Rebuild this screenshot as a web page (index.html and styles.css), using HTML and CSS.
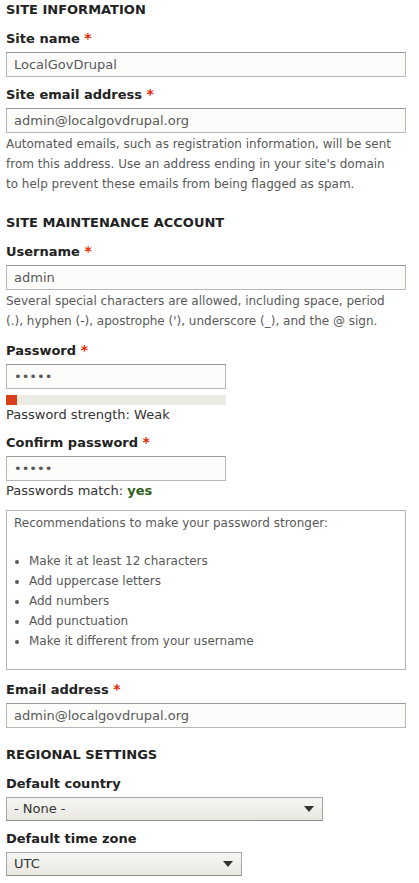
FILE: index.html
```html
<!DOCTYPE html>
<html lang="en">
<head>
<meta charset="utf-8">
<title>Configure site</title>
<link rel="stylesheet" href="styles.css">
</head>
<body>
<form class="form">
  <section class="fieldset">
    <h2 class="legend">Site information</h2>
    <div class="item">
      <label class="label">Site name <span class="req">*</span></label>
      <input class="text" type="text" value="LocalGovDrupal">
    </div>
    <div class="item">
      <label class="label">Site email address <span class="req">*</span></label>
      <input class="text" type="text" value="admin@localgovdrupal.org">
      <div class="desc">Automated emails, such as registration information, will be sent from this address. Use an address ending in your site's domain to help prevent these emails from being flagged as spam.</div>
    </div>
  </section>

  <section class="fieldset">
    <h2 class="legend">Site maintenance account</h2>
    <div class="item">
      <label class="label">Username <span class="req">*</span></label>
      <input class="text" type="text" value="admin">
      <div class="desc">Several special characters are allowed, including space, period (.), hyphen (-), apostrophe ('), underscore (_), and the @ sign.</div>
    </div>
    <div class="item">
      <label class="label">Password <span class="req">*</span></label>
      <input class="text short" type="password" value="admin">
      <div class="strength"><div class="strength-fill" style="width:5%"></div></div>
      <div class="status">Password strength: Weak</div>
    </div>
    <div class="item">
      <label class="label">Confirm password <span class="req">*</span></label>
      <input class="text short" type="password" value="admin">
      <div class="status">Passwords match: <span class="ok">yes</span></div>
    </div>
    <div class="suggestions">
      <div class="sugg-title">Recommendations to make your password stronger:</div>
      <ul class="sugg-list">
        <li>Make it at least 12 characters</li>
        <li>Add uppercase letters</li>
        <li>Add numbers</li>
        <li>Add punctuation</li>
        <li>Make it different from your username</li>
      </ul>
    </div>
    <div class="item">
      <label class="label">Email address <span class="req">*</span></label>
      <input class="text" type="text" value="admin@localgovdrupal.org">
    </div>
  </section>

  <section class="fieldset">
    <h2 class="legend">Regional settings</h2>
    <div class="item">
      <label class="label">Default country</label>
      <div class="select country"><span>- None -</span><span class="arrow"></span></div>
    </div>
    <div class="item">
      <label class="label">Default time zone</label>
      <div class="select tz"><span>UTC</span><span class="arrow"></span></div>
    </div>
  </section>
</form>
</body>
</html>
```

FILE: styles.css
```css
html, body {
  margin: 0;
  padding: 0;
  background: #fff;
}
body {
  font-family: "DejaVu Sans", Verdana, sans-serif;
  color: #333;
  font-size: 13px;
  line-height: 20px;
}
.form {
  width: 400px;
  margin-left: 6px;
  display: flex;
  flex-direction: column;
}
.fieldset {
  display: flex;
  flex-direction: column;
  margin-bottom: 17px;
}
.legend {
  margin: 0 0 9px;
  font-size: 13px;
  line-height: 20px;
  font-weight: bold;
  text-transform: uppercase;
  color: #222;
}
.item {
  display: flex;
  flex-direction: column;
  align-items: flex-start;
  margin-bottom: 8px;
}
.fieldset .item:last-child {
  margin-bottom: 0;
}
.label {
  display: block;
  height: 20px;
  font-weight: bold;
  color: #222;
  line-height: 20px;
  margin-bottom: 3px;
}
.req {
  color: #e62600;
  font-size: 14px;
  line-height: 1;
  vertical-align: top;
  position: relative;
  top: 2px;
}
.text {
  box-sizing: border-box;
  width: 400px;
  height: 25px;
  margin: 0;
  padding: 0 7px;
  border: 1px solid #b8b8b8;
  border-top-color: #999;
  background: #fcfcfa;
  font-family: "DejaVu Sans", Verdana, sans-serif;
  font-size: 13px;
  color: #595959;
  border-radius: 0;
  outline: none;
}
.text.short {
  width: 220px;
}
.desc {
  max-width: 390px;
  font-size: 12px;
  line-height: 20px;
  color: #595959;
  margin: 1px 0 2px;
}
.strength {
  width: 220px;
  height: 10px;
  margin-top: 6px;
  background: #ebeae4;
}
.strength-fill {
  height: 100%;
  background: #d8401b;
}
.status {
  font-size: 13px;
  line-height: 20px;
  color: #333;
}
.ok {
  color: #325e1c;
  font-weight: bold;
}
.suggestions {
  box-sizing: border-box;
  width: 400px;
  height: 160px;
  margin: 1px 0 10px;
  padding: 2px 7px 0;
  border: 1px solid #b4b4b4;
  font-size: 12px;
  line-height: 20px;
  color: #595959;
}
.sugg-list {
  margin: 18px 0 0;
  padding-left: 15px;
}
.select {
  box-sizing: border-box;
  height: 24px;
  padding: 0 8px 0 7px;
  display: flex;
  align-items: center;
  justify-content: space-between;
  border: 1px solid #a6a6a6;
  border-bottom-color: #8c8c8c;
  background: linear-gradient(#f6f6f3, #e8e7e1);
  font-size: 13px;
  color: #333;
}
.select.country {
  width: 317px;
}
.select.tz {
  width: 236px;
}
.arrow {
  width: 0;
  height: 0;
  border-left: 5px solid transparent;
  border-right: 5px solid transparent;
  border-top: 6px solid #333;
}
```
